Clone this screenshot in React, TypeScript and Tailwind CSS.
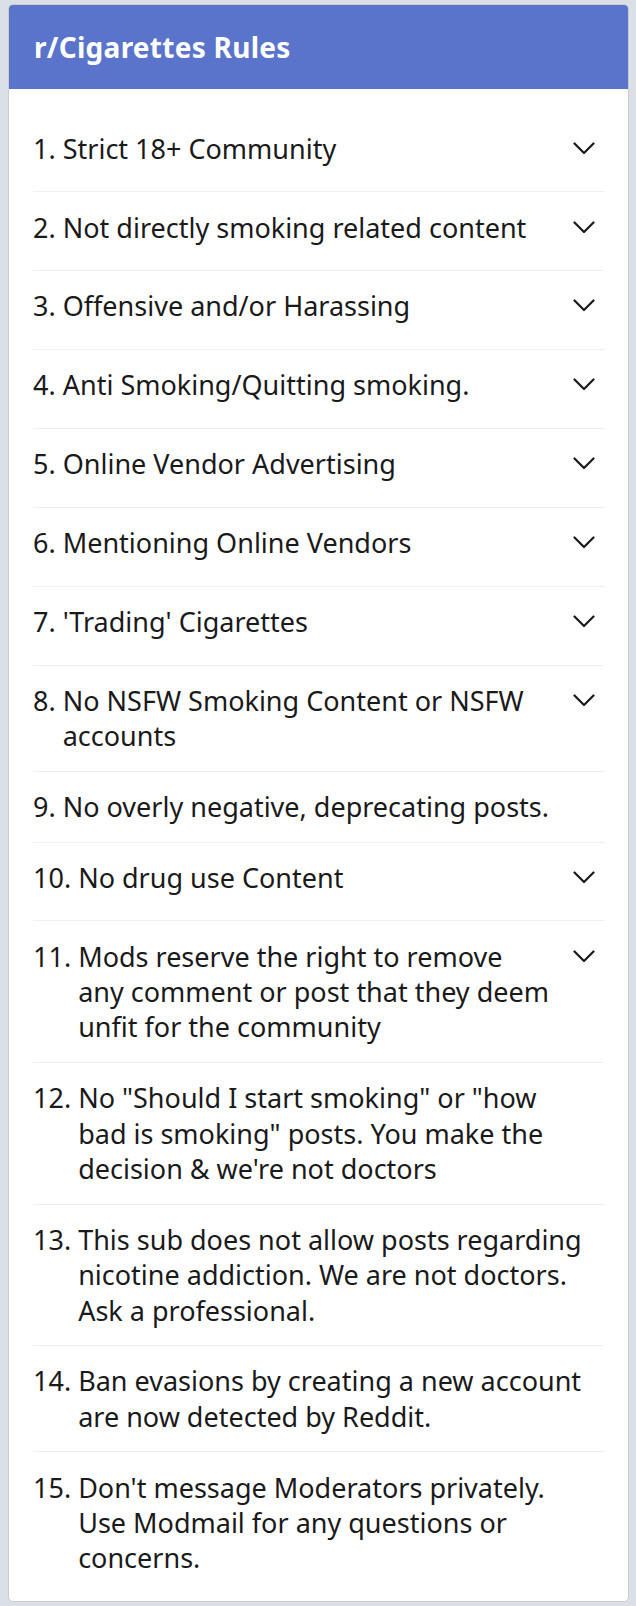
type Rule = { n: number; lines: string[]; more: boolean };

// line breaks follow the reference so wrapping matches regardless of font metrics
const RULES: Rule[] = [
  { n: 1, lines: ["Strict 18+ Community"], more: true },
  { n: 2, lines: ["Not directly smoking related content"], more: true },
  { n: 3, lines: ["Offensive and/or Harassing"], more: true },
  { n: 4, lines: ["Anti Smoking/Quitting smoking."], more: true },
  { n: 5, lines: ["Online Vendor Advertising"], more: true },
  { n: 6, lines: ["Mentioning Online Vendors"], more: true },
  { n: 7, lines: ["'Trading' Cigarettes"], more: true },
  { n: 8, lines: ["No NSFW Smoking Content or NSFW", "accounts"], more: true },
  { n: 9, lines: ["No overly negative, deprecating posts."], more: false },
  { n: 10, lines: ["No drug use Content"], more: true },
  {
    n: 11,
    lines: ["Mods reserve the right to remove", "any comment or post that they deem", "unfit for the community"],
    more: true,
  },
  {
    n: 12,
    lines: ['No "Should I start smoking" or "how', 'bad is smoking" posts. You make the', "decision & we're not doctors"],
    more: false,
  },
  {
    n: 13,
    lines: ["This sub does not allow posts regarding", "nicotine addiction. We are not doctors.", "Ask a professional."],
    more: false,
  },
  { n: 14, lines: ["Ban evasions by creating a new account", "are now detected by Reddit."], more: false },
  {
    n: 15,
    lines: ["Don't message Moderators privately.", "Use Modmail for any questions or", "concerns."],
    more: false,
  },
];

function RuleRow({ rule, last }: { rule: Rule; last: boolean }) {
  return (
    <li className={`flex items-start py-[17.2px] ${last ? "" : "border-b border-[#edeff1]"}`}>
      <span className="shrink-0 pr-[7px]">{rule.n}.</span>
      <span className="flex-1 min-w-0 whitespace-nowrap">
        {rule.lines.map((l, i) => (
          <span key={i} className="block">
            {l}
          </span>
        ))}
      </span>
      {rule.more && (
        <button
          type="button"
          aria-label="Expand rule"
          className="shrink-0 w-[40px] h-[43.5px] flex items-start pt-[11px] justify-center text-[#1a1a1b]"
        >
          <svg width="22" height="13" viewBox="0 0 22 13" fill="none" aria-hidden>
            <path d="M1.5 1.5 11 11l9.5-9.5" stroke="currentColor" strokeWidth="2.2" strokeLinecap="round" strokeLinejoin="round" />
          </svg>
        </button>
      )}
    </li>
  );
}

export default function App() {
  return (
    <div className="min-h-screen bg-[#dae0e6] pt-[4px] pb-[4px] pl-[8px] pr-[7px] font-['Noto_Sans',sans-serif]">
      <section
        className="rounded-[5px] border border-[#cccccc] bg-white overflow-hidden"
        aria-labelledby="rules-title"
      >
        <div className="h-[84px] bg-[#5a74cb] px-[25px] flex items-center">
          <h2 id="rules-title" className="text-white font-bold text-[28px] tracking-[0.01em]">
            r/Cigarettes Rules
          </h2>
        </div>
        <ol className="px-[24px] pt-[24.5px] pb-[8px] text-[27px] leading-[35.4px] text-[#1a1a1b]">
          {RULES.map((r, i) => (
            <RuleRow key={r.n} rule={r} last={i === RULES.length - 1} />
          ))}
        </ol>
      </section>
    </div>
  );
}
